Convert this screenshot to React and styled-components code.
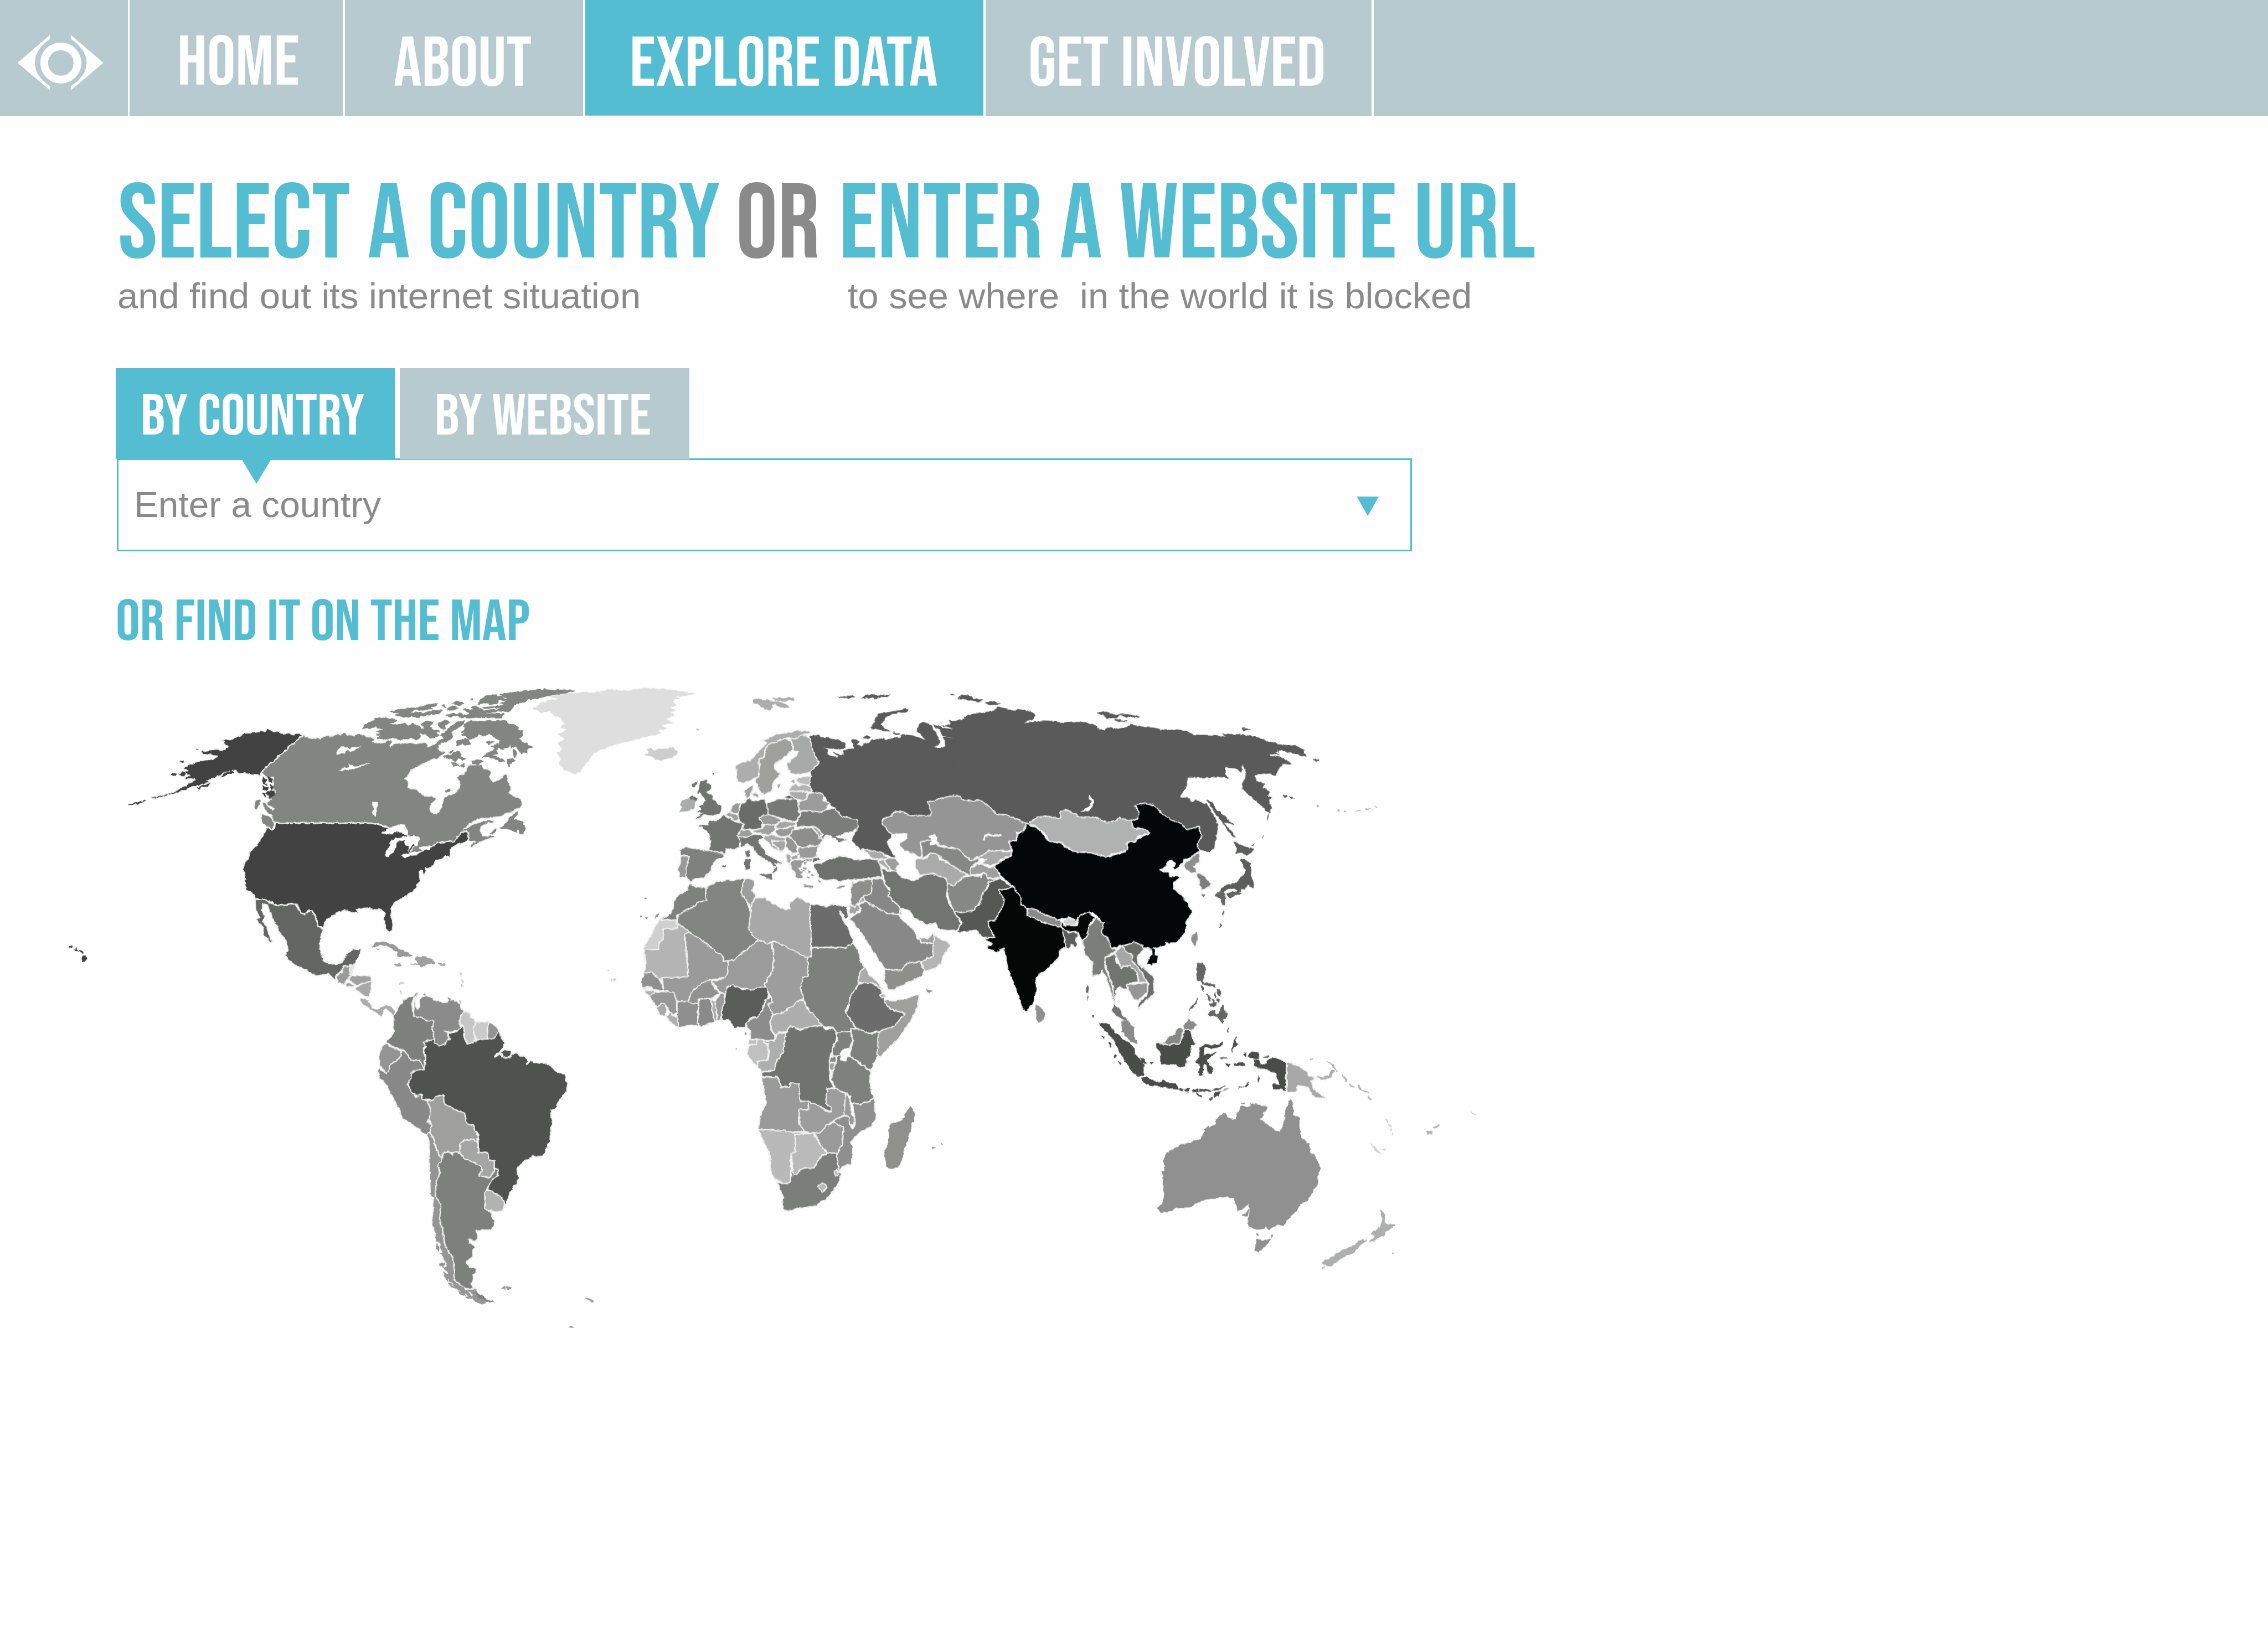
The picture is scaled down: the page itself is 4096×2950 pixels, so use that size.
import React, { useLayoutEffect, useRef, useState } from "react";
import styled, { createGlobalStyle } from "styled-components";

/* 1rem is ten design units */
const GlobalStyle = createGlobalStyle`
  html { font-size: 9.832px; }
  body { margin: 0; background: #fefefe; overflow: hidden; }
  *, *::before, *::after { box-sizing: border-box; }
`;

const teal = "#55bdd1";
const mist = "#b7cad0";
const grey = "#8a8a8a";
const display = `"Bebas Neue", Oswald, "Roboto Condensed", Roboto, sans-serif`;
const body = `"Helvetica Neue", "Liberation Sans", Arial, sans-serif`;

/* ---------- text fitted to a fixed measure ---------- */

/* $width is the inked width; $left and $right are the side bearings in em */
const FitBox = styled.span`
  display: block;
  flex: none;
  width: calc(${(p) => p.$width / 10}rem + ${(p) => p.$left + p.$right}em);
  margin: 0 -${(p) => p.$right}em 0 -${(p) => p.$left}em;
  text-align: left;
`;

const FitInner = styled.span`
  display: inline-block;
  vertical-align: top;
  white-space: pre;
  transform-origin: 0 0;
`;

function FitText({ width, left = 0.036, right = 0.018, children }) {
  const box = useRef(null);
  const inner = useRef(null);
  const [scale, setScale] = useState(1);
  useLayoutEffect(() => {
    const target = parseFloat(getComputedStyle(box.current).width);
    const natural = parseFloat(getComputedStyle(inner.current).width);
    setScale(target / natural);
  }, [width, children]);
  return (
    <FitBox ref={box} $width={width} $left={left} $right={right}>
      <FitInner ref={inner} style={{ transform: `scaleX(${scale})` }}>{children}</FitInner>
    </FitBox>
  );
}

/* ---------- navigation ---------- */

const NavBar = styled.nav`
  display: flex;
  width: 100%;
  height: 21.4rem;
  background: ${mist};
`;

const LogoCell = styled.a`
  flex: none;
  width: 23.8rem;
  border-right: 0.4rem solid #fff;
`;

const Logo = styled.svg`
  display: block;
  width: 23.4rem;
  height: 21.4rem;
`;

const NavItem = styled.a`
  flex: none;
  width: ${(p) => p.$width / 10}rem;
  padding: ${(p) => p.$top / 10}rem 0 0 ${(p) => p.$pad / 10}rem;
  border-right: 0.45rem solid #fff;
  background: ${(p) => (p.$active ? teal : mist)};
  background-clip: padding-box;
  box-shadow: ${(p) => (p.$active ? "inset 0 -0.2rem 0 #a4c8ce" : "none")};
  color: #fff;
  font: 400 12.86rem/0.8 ${display};
`;

/* ---------- page ---------- */

const Main = styled.main`
  display: flex;
  flex-direction: column;
  align-items: flex-start;
  padding: 12.4rem 0 0 21.3rem;
`;

const Heading = styled.h1`
  display: flex;
  gap: 3.5rem;
  margin: 0 0 0 0.7rem;
  height: 17.4rem;
  color: ${teal};
  font: 400 19.43rem/0.8 ${display};
`;

const Or = styled.span`
  color: ${grey};
  margin-right: 0.9rem;
`;

const Subtitles = styled.div`
  display: flex;
  gap: 38.6rem;
  height: 16.4rem;
  margin-left: 0.5rem;
  color: ${grey};
  font: 400 6.6rem/1 ${body};
`;

const Tabs = styled.div`
  display: flex;
  gap: 0.9rem;
  position: relative;
  z-index: 1;
`;

const Tab = styled.button`
  width: ${(p) => p.$width / 10}rem;
  height: 16.8rem;
  padding: 4.8rem 0 0 ${(p) => p.$pad / 10}rem;
  display: flex;
  align-items: flex-start;
  border: 0;
  background: ${(p) => (p.$active ? teal : mist)};
  color: #fff;
  font: 400 10.57rem/0.8 ${display};
`;

const Field = styled.div`
  position: relative;
  display: flex;
  justify-content: space-between;
  width: 237.9rem;
  height: 17.1rem;
  margin: -0.2rem 0 0 0.2rem;
  padding: 5rem 5.8rem 0 3.3rem;
  border: 0.4rem solid ${teal};
  color: ${grey};
  font: 400 6.6rem/1 ${body};

  &::before {
    content: "";
    position: absolute;
    left: 22.6rem;
    top: -0.1rem;
    width: 5.4rem;
    height: 4.5rem;
    background: ${teal};
    clip-path: polygon(0 0, 100% 0, 50% 100%);
  }
`;

const Caret = styled.span`
  width: 4.1rem;
  height: 3.6rem;
  margin-top: 1.7rem;
  background: ${teal};
  clip-path: polygon(0 0, 100% 0, 50% 100%);
`;

const MapTitle = styled.h2`
  margin: 8.9rem 0 0 0.2rem;
  height: 13.8rem;
  color: ${teal};
  font: 400 10.57rem/0.8 ${display};
`;

const WorldMap = styled.svg`
  display: block;
  width: 264rem;
  height: 122rem;
  margin-left: -11.3rem;
`;

const Land = styled.path`
  stroke: #f0f0f0;
  stroke-width: 2.1px;
  stroke-linejoin: round;
  vector-effect: non-scaling-stroke;
`;

const Isle = styled.path`
  stroke: ${(p) => p.fill};
  stroke-width: 1.4px;
  stroke-linejoin: round;
  vector-effect: non-scaling-stroke;
`;

const Water = styled.path`
  fill: #fefefe;
`;

const Shoreline = styled.path`
  fill: none;
  stroke: #f4f4f4;
  stroke-width: 4px;
  vector-effect: non-scaling-stroke;
`;

/* Each sheet has its own drawing grid: land is outlined, isles are not. */
const sheets = [
  {
    id: "greenland",
    at: "scale(2.657)",
    land: [],
    isles: [
      ["#dedede", "M369,490 375,486 387,483 380,482 392,480 400,479 412,479 420,477 432,478 445,476 462,477 468,478 480,479.5 476,481 467,481.5 469,483 465,485 468,488 463,489 467,491 463,493 466,495 460,497 465,500 457,501 461,504 455,505 457,507 448,509 440,511 433,513 427,514 420,517 414,519 410,521 407,526 403,530 401,534 397,535 391,533 387,529 388,525 385,521 389,518 386,514 391,511 386,508 392,505 388,503 391,500 387,496 380,493 385,492 373,492Z"],
    ],
  },
  {
    id: "north-america",
    at: "translate(100 1240) scale(.5995 .4082)",
    land: [
      ["#838583", "M762,269 770,278 785,282 800,289 805,282 815,286 830,275 850,276 868,266 875,272 892,258 898,272 905,265 915,275 930,266 945,268 955,276 970,278 985,292 975,302 990,306 1010,302 1022,292 1035,298 1030,322 1048,306 1065,310 1085,303 1110,310 1130,302 1145,312 1145,325 1170,308 1180,290 1190,300 1180,318 1178,335 1190,345 1200,352 1185,368 1175,378 1150,385 1140,395 1120,408 1105,422 1092,430 1084,455 1074,468 1085,480 1082,508 1110,515 1120,530 1135,545 1165,548 1172,560 1155,580 1150,600 1155,618 1168,624 1182,612 1190,575 1195,548 1225,535 1243,510 1242,480 1232,465 1238,452 1255,445 1262,425 1268,405 1290,405 1308,402 1315,420 1330,428 1338,440 1335,465 1345,485 1365,470 1380,450 1390,448 1388,475 1397,490 1400,515 1395,530 1405,542 1420,550 1430,560 1433,585 1425,600 1405,615 1385,625 1370,638 1335,643 1300,650 1275,668 1255,695 1270,685 1290,670 1310,660 1330,655 1350,660 1325,670 1308,685 1305,702 1315,725 1348,722 1350,735 1325,740 1300,758 1285,770 1275,780 1275,765 1290,750 1270,750 1265,705 1255,708 1240,735 1225,748 1185,752 1160,770 1150,785 1110,800 1080,805 1085,770 1080,722 1030,690 985,668 965,667 676,667 668,645 662,620 672,600 655,590 650,575 665,560 648,552 670,545 678,525 668,505 672,490 670,460 655,468 640,448 632,440Z"],
      ["#424242", "M762,269 745,265 732,268 716,262 700,264 686,256 672,254 660,246 652,243 645,252 630,254 612,256 600,262 585,262 575,270 560,277 550,286 538,292 525,288 510,293 520,300 516,312 532,320 524,332 512,338 498,334 480,338 465,344 452,342 448,350 455,360 475,358 490,365 500,366 492,375 480,380 460,384 440,388 425,398 412,406 400,413 395,425 410,432 398,440 406,450 415,455 400,460 398,470 418,468 430,472 418,485 400,500 385,512 370,522 350,532 335,540 320,545 298,553 298,560 330,552 350,540 370,534 400,520 420,505 440,500 465,488 480,484 470,475 500,458 512,450 522,442 540,432 555,430 562,442 580,444 600,448 622,450 634,458 632,440 680,378Z"],
      ["#424242", "M677,668 965,668 985,672 1005,682 1025,690 1045,690 1080,722 1110,760 1085,810 1110,808 1130,788 1160,770 1175,756 1225,750 1240,722 1250,706 1268,710 1268,735 1262,752 1240,765 1225,770 1212,790 1213,820 1200,815 1190,828 1168,838 1158,860 1146,875 1138,865 1140,885 1132,908 1126,880 1118,885 1122,905 1122,925 1115,940 1112,960 1090,985 1072,1000 1050,1020 1038,1035 1033,1050 1034,1090 1038,1125 1036,1145 1028,1160 1015,1140 1010,1105 1012,1070 1000,1055 985,1058 960,1050 940,1052 925,1055 935,1075 918,1068 905,1070 890,1060 870,1068 855,1085 835,1100 828,1120 825,1142 808,1132 805,1105 798,1080 790,1062 780,1062 768,1078 755,1070 748,1045 740,1030 720,1028 712,1036 682,1036 655,1018 640,1010 615,1008 614,992 600,978 587,968 585,930 584,900 578,880 583,845 595,825 600,795 620,765 635,735 645,710 652,685 668,700 675,690Z"],
      ["#646664", "M615,1012 640,1012 655,1022 680,1038 712,1038 722,1030 738,1032 746,1050 755,1072 768,1080 782,1064 790,1064 798,1085 804,1110 808,1134 826,1145 818,1175 812,1210 818,1250 825,1285 840,1302 858,1302 882,1295 892,1270 898,1248 915,1236 943,1233 938,1255 930,1275 922,1302 905,1302 905,1312 885,1312 880,1335 865,1350 862,1377 850,1360 840,1345 825,1348 812,1357 790,1348 765,1325 735,1305 715,1280 708,1262 716,1240 712,1200 700,1175 690,1160 680,1130 675,1110 665,1085 660,1060 655,1035 638,1032 636,1060 645,1085 640,1110 650,1130 655,1155 660,1185 670,1200 662,1205 642,1170 640,1140 628,1120 618,1100 630,1095 618,1060Z"],
      ["#9a9a9a", "M865,1352 885,1340 882,1325 890,1312 905,1312 905,1345 915,1350 900,1368 888,1392 868,1388Z"],
      ["#dcdcdc", "M908,1310 922,1302 918,1325 910,1345 905,1350Z"],
      ["#a0a0a0", "M900,1370 915,1355 945,1352 970,1358 972,1375 945,1388 930,1400 920,1395Z"],
      ["#a4a4a4", "M890,1390 902,1386 918,1398 916,1408 896,1402Z"],
      ["#a8a8a8", "M920,1412 945,1390 973,1377 970,1415 964,1455 945,1440Z"],
    ],
    isles: [
      ["#adafae", "M939,1460 962,1467 968,1488 973,1508 957,1492 944,1482Z"],
      ["#ababab", "M974,1505 990,1509 1005,1495 1025,1490 1040,1508 1041,1528 1032,1518 1020,1500 1007,1510 1002,1534 986,1518Z"],
      ["#9a9a9a", "M974,1226 985,1207 1010,1202 1035,1213 1060,1238 1095,1262 1080,1267 1055,1267 1050,1245 1025,1225 1000,1213Z"],
      ["#a0a0a0", "M1092,1303 1115,1303 1112,1292 1106,1280 1110,1271 1135,1271 1156,1280 1168,1299 1140,1303 1127,1315 1120,1305Z"],
      ["#424242", "M640,462 650,470 645,485 652,495 640,492ZM655,460 668,470 668,485 658,480ZM640,500 655,510 650,522 638,515ZM660,495 672,505 665,518ZM655,525 675,520 672,545 660,550 650,535ZM640,530 648,535 645,552ZM228,588 238,580 250,578 262,570 270,573 250,582ZM273,568 278,564 280,568ZM510,460 520,446 545,430 550,440 530,446ZM438,512 455,498 475,490 470,502 450,505 445,515ZM358,450 365,442 375,450 365,456ZM384,447 392,436 402,448 396,456ZM385,388 396,390 388,393ZM436,334 442,338 438,339ZM46,1224 53,1220 53,1228ZM63,1238 68,1232 73,1240ZM76,1243 88,1248 88,1254 80,1248ZM88,1268 96,1264 100,1278 88,1291 85,1275Z"],
      ["#838583", "M945,242 952,226 965,215 985,198 1010,192 1030,198 1048,202 1042,212 1022,222 1050,226 1075,218 1082,230 1098,218 1120,232 1125,250 1118,262 1120,280 1110,292 1095,284 1085,286 1060,292 1040,280 1015,292 990,284 1005,276 985,270 1005,262 985,255 1020,248 990,240 985,230 970,240Z"],
      ["#838583", "M1125,222 1145,208 1162,215 1150,230 1160,245 1180,255 1165,262 1180,270 1170,282 1150,285 1140,270 1122,265 1118,250 1135,240ZM1175,215 1205,207 1212,215 1195,232 1198,245 1182,238ZM1205,245 1232,215 1258,204 1252,225 1235,240 1215,260 1222,275 1210,295 1190,305 1178,298 1195,285 1182,270 1198,262ZM1030,168 1050,158 1090,148 1112,155 1085,166 1060,172ZM1045,180 1080,168 1130,172 1165,160 1190,160 1180,175 1140,180 1110,192 1075,188ZM1105,152 1140,138 1175,128 1170,140 1145,148 1160,155 1125,160ZM1200,182 1225,172 1238,182 1218,188ZM1220,128 1235,118 1255,130 1242,140ZM1205,150 1222,140 1238,148 1225,158 1208,160ZM1268,178 1275,165 1300,172 1380,178 1372,192 1300,190 1272,195 1245,190ZM1252,152 1280,160 1300,152 1320,162 1345,155 1360,165 1320,172 1290,170 1262,165ZM1275,148 1290,138 1302,150 1285,155ZM1188,140 1196,134 1200,144ZM1236,180 1248,170 1256,182 1246,192ZM1275,108 1282,108 1280,114Z"],
      ["#838583", "M1302,118 1325,95 1355,90 1370,100 1380,108 1355,118 1362,126 1335,134 1315,125 1300,130ZM1365,88 1392,82 1410,76 1445,74 1485,67 1530,69 1568,68 1592,73 1568,82 1545,86 1510,95 1480,105 1450,112 1440,120 1408,138 1400,150 1400,162 1378,166 1345,160 1370,150 1350,145 1330,152 1312,148 1365,140 1390,128 1368,128 1385,115 1370,112 1400,104 1372,98Z"],
      ["#838583", "M1255,222 1280,208 1320,210 1345,207 1385,208 1392,222 1410,228 1425,238 1420,248 1435,255 1436,275 1425,285 1432,300 1448,310 1463,325 1450,335 1450,352 1438,348 1430,355 1415,320 1400,330 1398,310 1388,325 1370,335 1365,325 1350,340 1360,355 1340,362 1355,372 1372,375 1380,390 1368,392 1345,375 1325,368 1312,375 1325,350 1340,345 1352,330 1340,322 1362,310 1368,295 1352,285 1340,272 1330,262 1322,275 1300,268 1295,282 1272,288 1260,275 1248,270 1265,255 1248,258 1258,240ZM1388,378 1405,375 1412,385 1398,400 1392,412 1388,395ZM1408,335 1418,345 1416,362 1410,372 1404,350ZM1232,300 1255,288 1268,290 1275,310 1262,318 1250,310 1235,318ZM1192,368 1215,360 1238,340 1245,355 1242,370 1260,378 1250,385 1240,375 1230,392 1215,378ZM1280,388 1295,380 1312,390 1300,402 1280,400ZM1215,396 1228,396 1240,410 1225,408ZM1245,408 1256,402 1254,416ZM1200,520 1210,514 1212,524 1203,532ZM1322,304 1332,298 1348,304 1330,316ZM1210,345 1225,338 1215,352Z"],
      ["#838583", "M1366,692 1378,678 1390,655 1405,632 1420,618 1415,635 1405,652 1418,655 1437,662 1435,678 1442,680 1440,700 1434,717 1425,705 1430,692 1415,702 1418,712 1405,700 1385,692ZM1386,580 1420,568 1395,584ZM1330,655 1345,660 1335,664ZM1345,700 1352,690 1350,710 1335,718ZM636,630 658,638 668,655 672,672 666,695 655,680 642,668 636,648ZM615,600 618,570 632,565 628,575 620,605ZM638,575 648,582 655,600 665,605 668,625 655,620 645,600Z"],
      ["#a8a8a8", "M1043,1300 1060,1300 1066,1306 1052,1312 1043,1307ZM1178,1300 1195,1300 1197,1308 1182,1308ZM988,1228 996,1232 990,1235Z"],
      ["#d2d2d2", "M1245,1345 1247,1345 1247,1354ZM1250,1370 1252,1380 1249,1388ZM1060,1386 1072,1390 1060,1391Z"],
    ],
    water: "M862,355 868,340 880,325 898,325 905,332 925,322 940,320 922,334 918,342 904,348 900,340 888,352 868,358ZM872,432 890,418 905,414 903,400 915,412 935,408 952,400 972,398 945,410 922,422 900,428ZM975,570 992,570 988,600 985,640 978,630 975,615 982,605 974,590ZM1000,714 1018,697 1030,688 1045,682 1056,672 1075,674 1084,700 1084,720 1064,712 1048,708 1035,716ZM1016,818 1015,795 1028,770 1032,748 1045,735 1078,726 1078,740 1050,752 1045,775 1038,800 1024,820ZM1080,728 1105,724 1120,730 1118,748 1112,772 1100,762 1092,778 1082,798 1086,770 1076,770 1072,752ZM1062,812 1085,802 1120,793 1112,804 1095,810 1075,826ZM1118,778 1150,770 1162,772 1150,786 1122,788Z",
  },
  {
    id: "south-america",
    at: "translate(640 1780) scale(.33333 .43367)",
    land: [
      ["#7e807e", "M260,190 270,165 290,150 300,130 320,128 335,120 355,118 375,104 395,100 380,112 362,124 350,150 354,175 360,200 380,206 400,204 415,215 430,220 470,220 465,260 472,300 440,308 413,312 430,325 415,335 415,355 426,375 420,425 405,410 397,388 345,390 325,365 310,350 285,342 255,335 225,320 208,318 215,305 235,290 250,270 248,200Z"],
      ["#8b8b8b", "M372,122 362,140 362,170 358,200 380,206 400,204 415,215 430,220 472,222 464,240 470,280 475,315 500,328 535,318 548,300 562,297 545,285 548,270 530,262 575,268 590,262 628,252 612,235 618,205 632,188 640,178 622,172 620,150 605,148 590,135 555,130 545,142 520,143 500,135 465,132 455,118 430,116 400,122 390,132 396,162 382,172 370,160Z"],
      ["#c6c6c6", "M633,186 655,180 668,190 672,205 690,212 706,225 690,245 692,275 706,302 690,312 662,320 642,300 640,265 632,240 612,235 618,208Z"],
      ["#cacaca", "M706,226 770,226 765,262 772,298 748,298 735,302 710,303 695,280 688,250Z"],
      ["#949494", "M772,230 790,232 815,245 830,260 815,285 800,302 770,298 766,262Z"],
      ["#949494", "M205,318 240,330 260,340 293,345 292,370 265,392 235,403 225,420 220,438 205,440 190,428 175,410 168,385 172,350 190,325Z"],
      ["#888888", "M160,430 172,415 182,432 210,442 222,435 230,408 265,392 292,368 293,345 315,352 345,390 397,388 402,400 420,425 375,430 352,438 345,465 328,490 350,525 375,542 403,530 408,555 440,560 452,590 448,640 432,650 460,660 445,702 430,704 405,690 380,674 345,660 320,645 300,632 288,620 285,600 265,575 250,555 240,535 225,515 210,495 185,470 165,465 168,450Z"],
      ["#505250", "M470,300 475,315 500,328 535,318 548,300 562,297 548,285 550,270 577,272 600,262 632,242 640,262 638,300 662,320 700,308 740,298 790,298 805,295 832,258 838,285 852,300 866,315 850,335 835,350 842,362 850,375 890,378 902,360 930,358 950,368 968,370 990,385 985,405 1005,390 1025,398 1055,400 1095,400 1120,415 1150,438 1195,445 1200,470 1211,492 1200,520 1185,540 1165,555 1150,575 1142,595 1118,600 1118,630 1127,655 1118,680 1115,725 1100,745 1088,775 1070,795 1015,795 995,808 975,813 950,828 930,845 932,865 941,885 930,910 915,925 905,945 885,965 875,990 865,1005 855,980 830,960 800,948 768,935 780,910 795,892 825,875 822,850 805,845 805,815 775,810 770,780 718,778 716,700 695,680 693,662 655,660 645,635 640,612 600,602 570,590 540,580 525,560 525,535 490,540 465,555 410,555 405,530 385,540 350,525 330,490 345,465 350,440 375,430 420,425 428,370 415,345 428,330 413,312Z"],
      ["#505250", "M842,350 862,342 900,350 895,370 875,380 855,376Z"],
      ["#9f9f9e", "M436,560 465,555 490,540 525,535 528,568 545,580 575,590 600,602 642,612 645,635 655,660 693,662 695,680 714,705 712,735 680,722 640,728 618,738 615,777 575,780 545,775 530,777 515,795 500,790 490,765 480,750 470,720 455,700 450,690 460,660 448,640 452,590Z"],
      ["#a5a5a5", "M618,738 645,727 680,722 710,735 718,778 770,782 775,810 805,815 803,860 780,885 718,878 735,855 735,840 700,825 665,812 640,805 615,780Z"],
      ["#b2b2b2", "M754,938 780,940 800,948 835,962 860,985 860,1010 850,1025 835,1028 800,1028 770,1022 753,1018Z"],
      ["#7e807e", "M515,795 530,777 555,777 575,790 585,778 615,780 625,795 640,806 665,812 700,825 735,840 735,855 718,878 780,887 803,862 803,848 818,848 826,860 822,878 800,890 780,910 765,935 752,945 752,1018 788,1032 790,1052 808,1070 805,1090 785,1105 740,1108 705,1108 712,1122 715,1145 695,1152 662,1147 668,1160 690,1170 706,1180 685,1192 688,1220 665,1232 655,1245 670,1265 707,1270 702,1288 688,1295 690,1318 676,1335 702,1358 665,1358 635,1352 610,1335 584,1318 582,1250 572,1218 550,1195 530,1170 520,1100 503,1060 512,1000 480,965 485,900 503,870 495,825 512,820Z"],
      ["#959595", "M432,705 450,692 470,725 480,755 500,790 518,798 512,820 495,825 503,870 485,900 480,965 512,1000 503,1060 520,1110 530,1170 550,1195 572,1218 582,1250 583,1318 605,1335 590,1342 560,1330 545,1310 530,1300 545,1290 520,1265 540,1258 532,1240 520,1228 505,1205 520,1200 500,1185 510,1165 480,1158 478,1120 460,1085 468,1040 468,970 452,955 450,900 448,850 445,740Z"],
    ],
    isles: [
      ["#959595", "M488,1168 498,1175 500,1195 490,1190ZM500,1255 530,1245 525,1265ZM525,1285 545,1300 550,1325 530,1305ZM555,1330 572,1338 590,1355 575,1350ZM575,1325 610,1340 640,1355 700,1358 715,1372 705,1385 735,1400 760,1415 735,1420 700,1410 690,1395 660,1398 645,1385 615,1378 610,1362 590,1350Z"],
      ["#7e807e", "M700,1372 725,1380 760,1402 800,1410 770,1412 735,1400 715,1390Z"],
      ["#9a9a9a", "M845,1355 860,1347 870,1352 860,1358ZM875,1345 903,1350 890,1360 876,1356ZM1305,1393 1330,1397 1352,1408 1345,1411 1325,1402ZM1218,1515 1240,1520 1222,1520Z"],
      ["#cccccc", "M615,18 622,20 620,25ZM622,45 634,50 634,60ZM626,68 634,74 626,78ZM285,95 292,92 290,108ZM610,135 622,133 620,148 612,145ZM1430,6 1440,6 1436,10ZM1450,45 1458,48 1452,52ZM1466,44 1474,46 1467,52Z"],
      ["#8b8b8b", "M418,104 428,108 420,112ZM550,126 565,128 558,132Z"],
    ],
    water: "M600,1360 625,1365 620,1368ZM655,1368 690,1380 680,1385ZM888,945 905,940 895,965 885,968ZM530,1278 545,1282 540,1288ZM640,1375 665,1388 650,1388Z",
    shores: "M805,372 840,355M700,1358 640,1358",
  },
  {
    id: "europe",
    at: "translate(1150 1240) scale(.40816 .33333)",
    land: [
      ["#adadad", "M492,500 505,492 520,485 540,478 560,470 575,450 590,435 605,410 620,395 635,372 610,362 635,352 655,340 680,325 705,322 740,318 765,305 790,308 810,305 835,318 820,328 812,325 790,335 770,350 740,355 735,348 715,356 690,362 675,368 650,380 630,405 622,440 618,460 596,470 603,520 594,570 575,575 560,582 530,598 505,590 495,560 500,545Z"],
      ["#9f9f9e", "M650,378 670,372 690,362 715,354 740,362 748,385 752,418 735,428 722,448 700,470 675,485 668,500 672,525 695,545 685,565 665,590 660,630 650,645 628,658 608,655 595,620 580,590 600,545 602,500 596,465 622,455 630,405Z"],
      ["#a8aaa9", "M740,350 770,350 790,333 812,335 828,350 835,380 840,410 848,440 870,485 850,510 830,540 795,545 760,550 740,542 728,510 722,490 745,470 770,440 772,425 755,420 750,385 745,370Z"],
      ["#bcbcbc", "M762,572 790,562 832,560 828,602 800,605 768,592Z"],
      ["#b4b4b4", "M735,635 745,610 762,600 775,615 800,603 830,615 838,648 800,640 735,642Z"],
      ["#aaacab", "M735,642 800,640 818,655 815,680 798,695 770,685 740,670Z"],
      ["#9c9c9c", "M818,658 850,648 880,652 888,665 890,690 918,710 905,725 902,745 882,758 820,750 778,748 775,700 798,695 815,680Z"],
      ["#777977", "M630,708 655,695 680,685 720,683 770,688 778,705 776,745 785,770 768,808 720,800 690,790 650,770 640,768Z"],
      ["#a0a0a0", "M533,635 550,620 575,605 570,640 560,670 545,682 535,660ZM568,658 588,650 598,665 590,680 575,672Z"],
      ["#6a6c6a", "M515,710 545,702 542,685 555,680 575,695 600,690 628,688 634,730 640,768 600,785 602,800 615,820 610,850 570,855 540,852 525,850 530,820 505,800 505,760Z"],
      ["#989898", "M470,752 478,722 492,710 518,706 512,735 505,765 485,765Z"],
      ["#a0a0a0", "M445,770 468,760 500,768 507,802 490,805Z"],
      ["#727472", "M322,830 350,825 372,830 368,805 400,805 415,795 430,785 437,768 470,795 500,812 530,820 522,855 500,885 512,895 512,955 480,962 450,960 445,988 370,965 382,920 378,890 362,858Z"],
      ["#7f817f", "M240,965 268,950 320,960 370,965 400,975 445,988 440,1005 400,1028 385,1060 385,1080 360,1105 350,1120 310,1125 290,1142 275,1118 268,1100 275,1045 285,1002 248,995Z"],
      ["#999999", "M248,998 285,1002 275,1045 268,1118 237,1118 238,1090 232,1070 245,1040Z"],
      ["#9c9c9c", "M500,885 520,855 545,852 570,870 565,885 545,895 512,895Z"],
      ["#a0a0a0", "M570,862 610,850 625,828 672,825 672,855 650,882 600,872 575,872Z"],
      ["#9a9a9a", "M600,785 640,768 700,800 670,828 615,825Z"],
      ["#a6a6a6", "M670,835 700,805 735,808 765,812 762,830 735,835 715,850 685,850Z"],
      ["#999999", "M668,862 690,850 715,850 755,832 762,850 735,888 690,895Z"],
      ["#8e8e8c", "M752,855 800,845 840,842 858,870 865,890 888,905 868,945 830,942 800,952 772,945 755,915 735,892Z"],
      ["#aaacab", "M835,838 855,838 870,860 888,882 868,900 858,868Z"],
      ["#7b7d7b", "M785,752 820,750 882,758 900,740 940,735 955,760 970,780 1010,790 1045,802 1045,840 1020,865 985,872 970,885 945,892 980,905 1002,912 975,918 958,928 945,905 925,898 920,882 900,885 885,905 875,895 888,880 870,855 850,835 765,840 770,808 785,775Z"],
      ["#959595", "M718,895 735,890 755,915 770,940 772,975 750,988 735,970 720,950Z"],
      ["#aaaaaa", "M620,905 622,885 665,882 690,895 718,898 716,920 655,915 665,940 700,975 665,960 640,925Z"],
      ["#a6a6a6", "M658,918 716,918 720,950 705,972 670,945Z"],
      ["#a9abaa", "M720,990 735,985 745,1005 742,1030 735,1048 722,1030Z"],
      ["#a3a3a3", "M742,998 772,990 778,1015 745,1022Z"],
      ["#9a9a9a", "M775,952 868,943 858,975 862,1000 835,1012 780,1012Z"],
      ["#999999", "M738,1045 748,1022 800,1018 840,1012 840,1028 805,1030 790,1045 795,1060 775,1065 800,1090 790,1100 800,1120 785,1125 770,1120 758,1090 748,1075Z"],
      ["#737573", "M512,915 510,890 545,895 575,878 612,882 620,900 598,912 605,935 620,955 630,985 655,1005 675,1015 705,1040 705,1050 685,1038 672,1042 682,1070 665,1100 658,1095 668,1065 658,1040 625,1020 600,1000 580,975 570,950 548,935 515,950Z"],
      ["#6e706e", "M838,1035 842,1005 868,1010 880,1022 850,1030ZM845,1040 880,1038 905,1022 945,1005 980,998 1010,1012 1040,1022 1080,1018 1125,1015 1145,1035 1148,1075 1155,1112 1110,1118 1060,1128 1015,1128 990,1130 962,1142 935,1130 905,1138 870,1120 860,1095 850,1070Z"],
      ["#aaaaaa", "M1060,962 1105,968 1150,978 1168,995 1185,1010 1125,1018 1100,1005 1090,985Z"],
      ["#9e9e9e", "M1165,1018 1200,1008 1215,1010 1232,1040 1215,1065 1220,1098 1190,1070 1172,1045Z"],
      ["#adadad", "M1128,1020 1160,1018 1175,1048 1192,1072 1180,1080 1150,1045Z"],
    ],
    isles: [
      ["#cecece", "M85,440 105,432 95,412 112,405 125,420 145,410 175,410 190,405 215,402 218,415 232,430 225,440 205,452 180,462 155,470 135,465 125,452 105,445Z"],
      ["#adadad", "M572,140 600,133 615,140 640,138 650,145 690,152 712,158 732,175 715,184 690,175 675,160 660,165 660,178 645,195 635,188 618,185 590,158 575,155ZM662,130 700,130 755,127 755,138 730,143 690,143 670,138ZM316,300 326,302 318,304Z"],
      ["#717371", "M335,600 340,585 365,582 358,600 382,608 378,625 362,645 340,655 335,642 325,655 330,625ZM345,650 372,652 385,665 388,685 405,700 412,722 430,725 430,745 420,765 385,772 350,770 315,792 340,768 355,762 322,755 345,745 330,725 352,708 362,690 350,678 342,660ZM288,682 302,668 320,680 312,695 295,692ZM300,605 318,590 315,605 305,622ZM390,548 400,538 395,552Z"],
      ["#aaadac", "M245,712 258,690 280,685 308,695 312,715 305,740 270,752 240,752 255,732Z"],
      ["#5a5a5a", "M718,678 740,670 760,675 755,686 725,686Z"],
      ["#adadad", "M745,590 755,580 758,592ZM682,615 692,600 690,620ZM770,990 775,985 775,992Z"],
      ["#737573", "M605,1098 630,1102 655,1098 655,1125 640,1120 615,1108ZM535,1022 558,1018 555,1070 538,1072ZM542,980 552,972 555,1000 545,1005ZM435,1055 445,1050 448,1060 438,1062Z"],
      ["#999999", "M798,1160 845,1166 842,1172 805,1168ZM950,1176 965,1162 985,1160 970,1176ZM800,1060 815,1065 808,1075ZM820,1080 830,1085 822,1088ZM800,1040 812,1035 806,1045ZM835,1100 845,1110 838,1108ZM820,1110 826,1118 818,1116ZM865,1130 876,1142 868,1142ZM790,1070 805,1085 796,1082Z"],
      ["#5a5a5a", "M818,350 845,332 868,332 875,345 905,348 940,355 985,378 990,395 975,410 950,408 900,402 865,390 905,412 905,435 925,448 955,458 955,445 935,430 970,445 985,440 975,425 1000,410 1030,408 1025,385 1015,360 1035,358 1050,370 1035,385 1060,395 1080,380 1110,362 1150,350 1170,360 1200,348 1235,350 1245,330 1290,335 1350,362 1335,335 1310,310 1320,270 1340,262 1370,275 1385,305 1405,345 1415,375 1395,395 1375,398 1410,405 1435,395 1440,370 1428,345 1470,350 1495,375 1475,345 1440,340 1425,335 1410,300 1385,275 1420,290 1445,298 1490,300 1425,278 1465,275 1455,255 1535,250 1520,235 1568,215 1568,705 1500,668 1460,670 1400,720 1360,800 1230,800 1165,850 1200,875 1175,935 1210,1010 1170,985 1060,960 1015,912 1040,860 1045,800 970,780 940,735 918,710 885,655 838,648 828,600 835,535 870,485 850,440 835,380Z"],
      ["#5a5a5a", "M1102,290 1120,265 1120,250 1140,215 1170,210 1205,202 1245,195 1255,187 1272,195 1258,205 1220,208 1180,222 1160,245 1145,270 1160,295 1188,310 1160,308 1125,300ZM1070,345 1085,335 1100,345 1088,352ZM1202,318 1235,325 1225,330ZM958,122 990,124 1000,115 1028,120 1005,130ZM1060,128 1080,112 1095,120 1110,105 1130,118 1160,112 1188,114 1155,122 1120,130 1095,125ZM1495,130 1510,112 1560,118 1568,140 1530,132ZM1460,110 1480,110 1470,114Z"],
      ["#888888", "M66,1330 72,1335 66,1338ZM85,1340 95,1338 90,1346ZM130,1340 145,1318 138,1335ZM85,1230 92,1232 88,1235Z"],
    ],
    water: "M960,1300 965,1300 1000,1345 995,1352 980,1330Z",
  },
  {
    id: "africa-arabia",
    at: "translate(1150 1580) scale(.40816 .43367)",
    land: [
      ["#7f817f", "M150,252 190,235 212,210 215,178 235,152 275,130 283,105 290,100 305,112 355,118 362,172 320,182 310,195 232,235 230,255Z"],
      ["#cfcfcf", "M78,380 95,345 120,310 125,285 155,255 230,255 230,292 168,292 168,340 150,355 148,380Z"],
      ["#b4b4b4", "M80,380 148,380 150,350 168,340 168,292 230,292 230,268 295,310 265,315 280,498 160,500 155,515 140,495 115,478 82,480 88,440Z"],
      ["#838583", "M232,235 310,195 320,182 362,172 358,118 400,95 450,85 490,86 530,80 530,105 518,140 548,180 560,230 555,290 570,320 597,338 490,420 440,430 440,410 395,380 232,268Z"],
      ["#9c9e9d", "M532,82 550,78 575,85 580,105 568,130 588,155 565,180 563,207 548,180 518,140Z"],
      ["#a8a8a8", "M563,207 568,180 590,160 630,162 658,185 680,195 715,208 738,208 738,178 770,160 790,165 828,185 835,405 815,415 668,345 640,355 600,338 570,320 553,290 560,230Z"],
      ["#6c6c6c", "M828,186 860,190 900,200 930,188 965,195 998,198 1000,240 990,252 962,215 980,260 1000,290 1020,330 1022,350 998,370 835,370Z"],
      ["#7e807e", "M835,372 990,372 1022,352 1045,380 1052,410 1058,440 1075,455 1052,480 1045,530 1010,580 1005,605 988,645 1015,685 1035,712 1005,728 950,730 930,712 880,703 830,650 805,600 785,545 795,497 820,492 818,410 835,408Z"],
      ["#9d9d9d", "M655,350 670,345 818,415 820,492 797,495 785,545 802,588 765,602 755,620 725,630 720,645 690,652 660,655 638,612 662,605 640,560 625,525 640,500 662,470 665,380Z"],
      ["#9b9b9b", "M597,340 640,355 658,347 655,375 665,390 662,470 640,500 625,525 630,542 605,540 560,550 540,545 520,545 480,532 455,540 447,570 425,562 385,515 445,500 458,480 460,430 490,420Z"],
      ["#9a9a9a", "M265,312 298,312 395,380 438,410 440,430 458,430 458,480 445,498 380,510 345,520 300,552 280,600 232,600 215,562 168,558 162,500 282,498Z"],
      ["#8f8f8f", "M68,515 82,480 115,478 140,495 158,520 168,557 120,548 78,552 76,545 125,545 110,538 76,542Z"],
      ["#979797", "M105,575 130,560 168,558 215,562 228,600 228,650 212,660 195,640 175,610 160,608 140,625 118,598Z"],
      ["#b0b0b0", "M80,555 128,553 128,565 105,575Z"],
      ["#a8a8a8", "M138,628 160,608 175,610 185,635 178,662 150,655Z"],
      ["#aeaeae", "M178,668 200,642 212,660 230,668 240,712 205,692Z"],
      ["#8f8f8f", "M230,602 285,600 328,612 322,650 325,702 280,702 240,712 230,668Z"],
      ["#929290", "M280,602 300,552 345,520 382,510 390,530 422,565 385,585 328,590 325,612Z"],
      ["#8a8a8a", "M328,590 382,588 390,640 397,688 340,708 322,690 328,640Z"],
      ["#acacac", "M385,590 400,600 405,630 410,682 398,685 390,640Z"],
      ["#9b9b9b", "M402,605 425,565 443,568 447,600 430,635 430,680 412,682Z"],
      ["#5b5d5b", "M430,678 430,635 447,600 447,570 455,540 480,530 520,547 560,550 605,540 635,542 645,572 622,610 610,640 590,672 570,665 545,690 535,712 482,715 475,690 460,678Z"],
      ["#8c8c8c", "M543,692 570,668 590,672 622,620 630,590 650,580 662,605 640,612 660,655 648,690 655,720 672,745 670,765 560,760 558,720 545,712Z"],
      ["#adadad", "M660,658 690,652 725,640 725,630 755,618 765,602 800,592 815,632 845,655 880,700 840,705 785,718 740,703 720,728 690,732 672,745 655,720 648,690Z"],
      ["#bcbcbc", "M555,763 587,763 587,783 552,783Z"],
      ["#c0c0c0", "M543,822 555,785 587,783 590,760 620,762 622,778 640,785 642,810 635,850 590,855 592,880 565,850Z"],
      ["#acafad", "M620,765 670,768 680,738 720,733 710,808 682,850 665,892 610,897 590,872 600,852 640,850 645,815 640,778 622,778Z"],
      ["#717371", "M610,900 640,900 665,892 682,850 710,808 720,733 738,703 785,720 840,705 880,703 900,720 930,712 945,730 948,762 930,795 915,850 920,900 938,965 905,970 902,1035 922,1048 920,1068 870,1040 785,1020 778,948 740,945 735,962 698,965 685,920 612,918Z"],
      ["#9a9a9a", "M610,922 682,920 698,965 735,962 740,945 778,948 785,1022 822,1025 820,1058 780,1058 780,1118 805,1150 760,1155 715,1148 597,1140 600,1100 615,1060 632,1030 620,965Z"],
      ["#9d9d9d", "M822,1025 870,1040 905,1068 922,1068 922,1048 902,1035 905,970 940,968 990,992 985,1080 935,1105 912,1118 870,1158 830,1155 805,1150 780,1118 780,1058 820,1058Z"],
      ["#b9b9b9", "M597,1142 715,1148 760,1155 850,1155 762,1165 762,1238 743,1240 740,1360 728,1372 705,1370 690,1358 672,1355 655,1330 645,1240 610,1175Z"],
      ["#bababa", "M763,1164 845,1158 862,1190 880,1210 900,1240 875,1260 845,1308 805,1305 785,1310 770,1335 752,1332 745,1240 763,1238Z"],
      ["#9a9a9a", "M848,1158 872,1158 900,1128 928,1112 980,1132 975,1205 950,1242 905,1240 882,1215Z"],
      ["#7c7e7c", "M680,1362 705,1372 730,1372 742,1360 745,1300 752,1332 770,1335 788,1310 805,1305 845,1308 875,1262 905,1243 948,1242 957,1310 970,1330 955,1375 915,1425 860,1465 815,1472 775,1475 730,1488 710,1480 702,1450 708,1430Z"],
      ["#b8b8b8", "M863,1388 885,1367 906,1385 886,1406Z"],
      ["#b4b4b4", "M933,1325 948,1312 960,1330 945,1342Z"],
      ["#8f8f8f", "M1018,1032 1060,1035 1120,1012 1120,1050 1126,1095 1105,1130 1060,1150 1010,1195 1020,1215 1020,1260 1012,1288 975,1300 960,1322 950,1245 975,1205 980,1132 932,1112 940,1100 985,1085 1008,1092 1005,1115 1020,1140 1032,1120 1030,1090Z"],
      ["#9b9b9b", "M988,992 1005,998 1010,1040 1015,1075 1032,1095 1020,1140 1005,1115 1005,1090 982,1080Z"],
      ["#7f817f", "M930,895 945,860 950,828 1005,830 1100,895 1098,940 1105,980 1120,1012 1060,1035 1015,1030 1000,992 945,970 925,935Z"],
      ["#7f817f", "M1012,718 1040,715 1100,738 1148,725 1135,745 1135,830 1118,860 1105,895 1005,830 1022,770Z"],
      ["#7f817f", "M948,730 1008,725 1022,765 1005,800 990,830 930,830 928,800 952,765Z"],
      ["#8d8d8d", "M918,838 945,828 948,855 915,862Z"],
      ["#a0a0a0", "M915,862 946,857 930,893 920,890Z"],
      ["#6c6c6c", "M1048,528 1075,518 1110,522 1135,540 1158,568 1165,602 1195,635 1255,652 1205,708 1148,722 1100,735 1035,712 1015,685 990,645 1005,620 1008,580Z"],
      ["#acacac", "M1055,470 1080,455 1095,490 1130,512 1160,560 1135,540 1110,520 1048,522Z"],
      ["#9f9f9e", "M1165,592 1200,598 1265,585 1315,570 1318,600 1300,650 1275,690 1230,755 1180,800 1145,835 1132,825 1135,745 1148,722 1205,708 1258,650 1195,635 1165,605Z"],
      ["#b8b8b8", "M1145,572 1165,565 1168,582 1150,588Z"],
      ["#888888", "M1003,250 1030,232 1055,215 1045,195 1075,175 1125,200 1180,228 1225,228 1245,255 1290,290 1310,330 1330,350 1382,358 1382,408 1325,432 1265,438 1240,468 1165,462 1155,445 1130,415 1115,390 1085,350 1060,310 1030,275Z"],
      ["#8e8e8c", "M1163,464 1240,468 1262,438 1325,432 1342,475 1330,495 1280,515 1210,548 1180,550 1165,515Z"],
      ["#b4b4b4", "M1328,432 1382,408 1382,358 1390,315 1410,335 1445,345 1462,365 1430,405 1420,435 1390,462 1345,472Z"],
      ["#a0a0a0", "M1315,332 1360,332 1388,308 1385,355 1335,350Z"],
      ["#bcbcbc", "M1213,218 1235,208 1245,232 1225,232Z"],
      ["#8e8e8c", "M1015,98 1050,90 1110,82 1105,145 1075,170 1028,200 1012,185Z"],
      ["#878787", "M1110,80 1155,76 1165,105 1190,130 1180,150 1210,180 1235,210 1228,228 1180,228 1075,175 1072,155 1105,140Z"],
      ["#a6a6a6", "M1008,190 1030,200 1070,152 1075,172 1040,190 1058,205 1030,228 1003,230Z"],
      ["#727472", "M1148,32 1180,48 1212,50 1245,75 1290,88 1335,68 1365,55 1425,68 1445,85 1450,120 1443,155 1455,185 1475,215 1490,240 1512,270 1490,300 1440,302 1405,290 1395,270 1355,275 1300,250 1275,215 1235,205 1210,180 1180,150 1190,125 1165,100Z"],
    ],
    isles: [
      ["#90908e", "M1282,1045 1297,1070 1298,1110 1288,1110 1270,1180 1250,1225 1240,1275 1228,1297 1195,1308 1172,1298 1162,1240 1185,1200 1182,1145 1192,1122 1232,1110 1255,1090 1258,1075Z"],
      ["#909090", "M1355,552 1378,555 1362,562ZM1378,1218 1390,1222 1380,1223ZM1420,1202 1426,1203 1422,1206ZM535,738 542,730 543,738ZM495,800 499,798 498,802Z"],
    ],
    water: "M962,820 980,800 1002,797 1005,825 992,852 965,850ZM1005,995 1012,1000 1018,1060 1028,1090 1015,1082ZM1012,1118 1022,1125 1020,1142Z",
    shores: "M920,890 922,930 940,968",
  },
  {
    id: "asia",
    at: "translate(1560 1240) scale(.63776 .43367)",
    under: [
      ["#5a5a5a", "M300,196 330,190 332,178 375,162 412,156 430,136 465,152 495,148 520,155 535,170 532,185 510,195 500,208 525,200 560,195 600,198 610,208 640,200 680,202 705,212 715,225 735,238 745,225 775,230 800,222 810,212 850,222 880,226 915,238 940,232 970,238 990,255 1060,258 1090,265 1075,250 1130,255 1165,262 1205,282 1240,295 1260,308 1250,298 1285,302 1312,320 1308,328 1318,345 1285,335 1262,325 1228,315 1238,325 1222,330 1240,338 1208,335 1215,345 1245,350 1262,365 1273,378 1250,378 1235,395 1228,425 1200,415 1168,425 1172,450 1195,462 1190,480 1210,495 1205,515 1218,520 1208,535 1215,560 1212,588 1185,550 1165,525 1138,490 1132,462 1142,440 1145,408 1132,375 1130,412 1112,392 1082,390 1082,425 1095,438 1060,430 1040,435 975,433 970,468 965,485 952,518 980,525 990,540 1000,530 1030,550 1045,585 1062,635 1058,680 1050,735 1040,748 1015,742 960,720 860,640 740,640 600,640 515,632 440,620 350,600 300,600Z"],
      ["#5a5a5a", "M1032,530 1045,540 1060,575 1085,605 1108,636 1090,622 1080,630 1098,660 1112,688 1100,675 1075,625 1052,580ZM318,95 340,88 355,102 385,108 375,115 345,108ZM393,118 410,113 435,122 405,128ZM715,160 740,158 755,168 780,170 772,182 745,182 730,170ZM780,168 800,168 835,178 800,178ZM765,188 800,198 775,196ZM1130,225 1155,230 1135,235ZM1338,358 1355,362 1345,365ZM1250,510 1262,515 1255,520ZM1268,515 1280,522 1272,524Z"],
      ["#a0a0a0", "M1347,552 1353,557 1350,558ZM1408,573 1412,576 1408,577ZM1426,577 1431,577 1428,580ZM1457,576 1473,576 1462,577ZM1487,568 1500,566 1493,569ZM1515,560 1520,560 1518,562Z"],
    ],
    land: [
      ["#959595", "M95,632 98,610 120,600 130,580 155,580 175,598 195,595 235,598 238,575 225,540 260,525 280,518 300,510 318,515 325,528 355,535 378,530 400,555 425,590 450,592 475,605 512,630 502,662 482,668 482,702 460,705 470,745 400,745 380,770 350,785 335,765 315,738 290,732 260,722 250,700 235,703 205,708 210,775 185,760 160,745 140,720 165,695 165,672 125,678Z"],
      ["#868886", "M205,708 240,700 255,722 290,735 315,738 335,768 350,788 370,770 375,790 350,815 348,850 325,835 300,810 270,780 250,758 235,755 212,778Z"],
      ["#aaaaaa", "M190,775 210,780 225,775 235,755 255,762 262,780 300,810 325,835 342,848 325,858 320,878 300,895 285,885 280,862 240,842 205,850 190,812Z"],
      ["#aaaaaa", "M350,785 380,770 400,745 470,748 470,768 440,780 430,795 410,808 380,800 395,785 370,778Z"],
      ["#9f9f9f", "M348,820 380,800 400,815 425,815 438,860 400,862 388,840 370,845 348,850Z"],
      ["#868886", "M283,885 300,895 325,860 350,852 380,855 385,840 395,845 400,865 435,862 400,880 398,905 385,925 380,960 355,1000 325,1008 302,1003 290,965 282,920Z"],
      ["#565856", "M302,1003 325,1008 355,1000 380,965 385,925 398,905 402,880 435,862 450,875 468,895 460,908 430,908 440,935 448,960 435,1000 420,1040 400,1045 405,1075 420,1112 388,1115 365,1085 312,1092 325,1050Z"],
      ["#020607", "M512,632 535,645 552,660 570,700 610,715 645,750 705,755 740,772 795,750 798,712 830,695 865,670 845,655 815,648 815,620 832,608 835,580 823,555 850,543 878,552 895,580 925,615 950,625 975,655 1008,643 1015,690 1002,715 1010,745 985,775 965,785 960,800 935,828 932,815 940,800 930,788 915,795 915,812 895,826 905,835 920,835 922,855 940,850 955,858 935,880 935,905 955,930 975,965 980,985 988,1005 972,1050 970,1090 955,1115 942,1138 912,1138 910,1150 880,1158 870,1170 865,1160 840,1160 825,1135 780,1150 755,1160 745,1115 728,1098 732,1055 712,1020 705,1010 680,1008 660,1028 655,1045 635,1030 600,1038 530,995 515,990 495,975 495,945 470,895 435,850 430,830 415,815 430,795 465,770 470,745 462,705 482,702 485,672 503,662Z"],
      ["#b0b2b1", "M518,625 545,602 575,597 583,605 610,608 608,578 622,572 655,590 658,603 700,602 720,610 740,625 760,622 780,608 815,618 815,648 845,652 866,668 832,685 825,705 798,712 802,742 785,752 765,755 740,772 705,755 645,750 630,730 610,712 575,705 570,685 550,655Z"],
      ["#050606", "M430,910 460,908 470,895 495,945 495,975 515,992 512,1015 560,1050 612,1072 608,1042 622,1062 655,1062 662,1025 680,1010 692,1008 708,1030 692,1060 688,1100 675,1130 665,1110 660,1092 622,1085 630,1150 608,1165 605,1195 585,1225 560,1260 537,1280 540,1330 533,1385 522,1405 512,1430 498,1412 480,1330 460,1260 452,1210 445,1160 435,1165 425,1178 402,1160 398,1148 412,1142 388,1118 420,1112 405,1075 402,1045 420,1040 435,1000 448,960Z"],
      ["#5c5c5c", "M612,1070 630,1090 660,1092 655,1110 652,1125 660,1148 650,1155 640,1140 635,1158 625,1155Z"],
      ["#8b8b8b", "M515,992 532,992 560,1015 608,1042 610,1070 560,1050 512,1018Z"],
      ["#d0d0d0", "M615,1045 632,1028 655,1045 652,1062 622,1060Z"],
      ["#8e8e8e", "M962,805 985,775 1008,752 1010,790 992,812 1003,835 985,842 975,830Z"],
      ["#7d7f7d", "M1000,840 1020,845 1042,885 1038,900 1015,912 1008,880Z"],
      ["#7c7e7c", "M672,1128 685,1110 690,1070 700,1050 712,1022 718,1040 733,1050 728,1095 745,1118 757,1160 772,1165 735,1200 737,1240 752,1295 762,1340 764,1385 758,1375 750,1320 730,1250 722,1270 700,1275 700,1215 678,1182Z"],
      ["#727472", "M735,1202 768,1180 770,1215 785,1242 810,1230 828,1255 833,1300 802,1310 800,1335 778,1322 768,1340 765,1395 778,1412 790,1440 808,1470 782,1462 755,1425 762,1390 760,1320 748,1275Z"],
      ["#6b6d6b", "M778,1150 800,1145 820,1130 845,1148 848,1165 830,1192 832,1222 865,1262 878,1290 880,1350 850,1385 832,1420 835,1385 857,1362 862,1310 840,1260 815,1215 812,1188Z"],
      ["#a6a6a6", "M765,1180 785,1150 795,1172 815,1185 815,1212 838,1250 858,1300 835,1305 830,1262 808,1230 782,1240 775,1210Z"],
      ["#969696", "M800,1315 858,1303 860,1345 832,1380 815,1370Z"],
    ],
    isles: [
      ["#020607", "M860,1208 872,1190 888,1192 885,1215 872,1228 862,1220ZM874,1165 880,1165 879,1188 875,1188Z"],
      ["#5c5e5c", "M1108,708 1130,722 1150,738 1163,735 1160,750 1145,765 1130,752 1115,755 1118,735ZM1128,778 1140,785 1152,798 1158,830 1155,850 1165,880 1162,900 1148,892 1140,902 1120,910 1108,902 1085,910 1078,920 1065,922 1080,895 1105,888 1118,880 1128,855 1140,845 1142,825 1130,790ZM1058,935 1078,930 1083,955 1080,975 1070,950ZM1088,930 1105,918 1110,925 1095,942ZM1112,920 1128,908 1128,918 1118,926ZM1160,723 1167,714 1165,719ZM1206,592 1208,596 1205,615ZM1189,689 1193,681 1190,690ZM1078,1000 1082,1005 1077,1016ZM1069,1055 1073,1060 1067,1068Z"],
      ["#8d8d8d", "M988,1105 1000,1090 1003,1110 996,1148 988,1130Z"],
      ["#909090", "M540,1398 552,1412 563,1440 558,1462 545,1470 538,1460Z"],
      ["#7d7f7d", "M1015,932 1025,932 1020,942Z"],
    ],
    water: "M108,708 120,690 122,676 168,670 166,695 142,712 165,755 178,765 190,758 202,780 185,790 188,815 200,850 185,870 165,865 145,845 150,810 130,760ZM692,503 698,520 706,540 700,560 690,578 665,581 680,570 692,555 698,540 690,520ZM228,685 245,675 255,690 248,720 232,722 238,700Z",
    shores: "M388,702 392,684 402,678 415,682 440,678",
  },
  {
    id: "oceania",
    at: "translate(1900 1640) scale(.53571 .45918)",
    land: [
      ["#4a4c4a", "M418,598 430,600 445,610 500,602 512,565 515,550 537,550 543,585 557,605 540,615 537,650 523,668 521,697 498,702 485,690 460,690 433,687 431,640 419,625Z"],
      ["#868886", "M427,602 450,600 455,580 480,568 488,546 502,538 512,552 500,602 460,610Z"],
      ["#8a8a8a", "M508,535 520,518 530,500 542,513 560,530 547,549 512,549Z"],
      ["#4a4c4a", "M782,699 800,670 820,656 865,678 862,797 848,787 818,787 823,768 840,765 828,727 788,707 766,704Z"],
      ["#a8a8a8", "M866,677 905,693 932,713 942,733 964,744 948,755 957,784 974,799 1003,826 975,822 953,814 938,777 905,772 897,797 882,802 866,800Z"],
    ],
    isles: [
      ["#4a4c4a", "M732,655 748,638 765,642 772,652 770,664 758,665 740,660ZM755,672 770,670 775,685 795,695 785,702 768,702 755,690Z"],
      ["#8a8a8a", "M300,515 318,512 340,540 342,575 352,605 325,590 302,555Z"],
      ["#4a4c4a", "M222,525 258,528 275,558 300,585 320,598 345,625 342,645 360,665 375,685 373,732 358,735 340,722 320,690 300,650 285,620 275,590 250,560ZM368,745 385,740 410,755 435,762 442,750 462,764 485,765 495,785 470,782 430,775 385,768ZM498,786 512,785 508,794ZM515,788 535,784 530,796ZM540,792 560,786 565,795 545,798ZM568,788 605,790 600,795 570,795ZM610,788 640,782 655,773 630,790ZM555,803 575,812 575,820 562,812ZM615,820 622,800 638,797 632,810ZM600,826 610,822 606,832ZM565,732 568,690 555,680 570,650 568,625 585,607 610,612 635,610 645,598 640,618 610,622 580,618 580,650 600,648 622,642 598,662 590,668 598,690 612,705 605,728 595,715 592,690 580,680 578,712 575,732ZM678,640 682,600 692,580 690,600 698,608 684,618ZM688,683 715,680 722,695 700,690 685,690ZM658,685 672,688 668,698ZM635,660 660,662 640,664ZM718,650 728,640 722,654ZM768,735 772,745 768,758ZM735,762 726,780 728,768ZM700,783 720,776 705,780ZM365,660 380,672 385,685 370,680ZM398,680 408,680 402,688ZM232,574 240,578 238,584ZM255,600 264,608 260,615ZM275,645 282,655 278,662ZM288,675 298,688 294,688ZM820,768 835,768 835,782 820,782ZM785,660 805,655 800,660ZM200,493 204,495 202,500ZM668,545 664,560 666,550Z"],
      ["#646664", "M560,282 580,282 588,305 582,335 575,348 582,362 602,365 605,375 585,368 568,352 556,345 558,320ZM572,368 580,378 580,395 574,385ZM603,362 620,370 622,380 610,375ZM628,385 640,400 640,415 630,410ZM592,405 600,415 604,435 596,425ZM608,425 618,430 615,440ZM620,400 622,420 618,418ZM600,445 625,440 618,455 606,455ZM628,425 636,435 632,440ZM600,480 612,472 620,475 618,485 632,488 640,460 648,452 652,470 662,490 658,505 650,508 648,522 635,510 630,498 618,490 603,495ZM530,470 548,448 560,425 558,440 540,465ZM182,375 186,380 184,400 181,400ZM181,415 184,415 182,430ZM628,0 650,0 655,35 652,52 642,40 640,15 622,12ZM662,10 680,0 708,4 690,10 670,20Z"],
      ["#b0b0b0", "M970,738 990,740 1010,732 1022,710 1030,715 1020,735 1000,746 985,748ZM1005,675 1025,690 1038,715 1030,705 1015,685ZM1058,732 1075,752 1070,755ZM1082,768 1098,778 1092,778ZM1112,772 1122,790 1116,785ZM1125,792 1145,800 1138,800ZM1145,815 1158,828 1150,825ZM948,665 956,668 950,670ZM640,795 665,782 660,790ZM1346,958 1360,955 1365,964 1350,968ZM1368,940 1388,932 1378,942Z"],
      ["#d0d0d0", "M1155,1005 1168,1022 1186,1042 1172,1036 1160,1020ZM1207,905 1213,915 1209,920ZM1215,925 1225,935 1217,938ZM1222,945 1226,950 1222,958ZM1228,965 1230,972 1227,970ZM1195,1028 1205,1028 1200,1032ZM1500,882 1515,888 1508,888Z"],
      ["#909090", "M423,1262 432,1252 440,1248 447,1210 442,1170 443,1135 438,1115 448,1118 447,1100 445,1070 455,1042 475,1030 500,1012 535,1002 570,988 582,965 585,948 598,935 602,948 610,935 622,930 622,910 635,898 655,885 662,895 675,908 692,908 695,885 705,870 708,855 725,858 745,855 742,845 760,848 775,852 798,858 785,880 785,892 772,905 795,925 825,955 843,957 855,925 860,905 862,875 872,845 878,828 886,850 888,890 908,900 908,935 913,950 912,980 940,1005 948,1045 960,1048 962,1065 975,1085 981,1105 972,1130 972,1165 955,1195 938,1230 915,1245 900,1270 880,1295 855,1330 830,1330 805,1350 795,1335 785,1345 765,1348 735,1332 733,1310 738,1290 738,1240 720,1262 705,1270 698,1275 690,1240 685,1225 655,1215 630,1220 585,1228 560,1238 540,1258 485,1260 475,1272 450,1280 432,1275ZM765,1387 785,1393 810,1388 800,1405 780,1428 765,1437 756,1430 762,1410ZM710,1292 725,1285 735,1270 732,1292ZM708,843 722,840 715,846ZM815,1370 818,1375 812,1382ZM763,1367 768,1368 765,1375Z"],
      ["#adafae", "M1188,1270 1196,1280 1202,1300 1200,1318 1212,1328 1235,1326 1230,1340 1205,1358 1200,1372 1180,1378 1165,1395 1150,1398 1170,1378 1155,1362 1170,1355 1185,1340 1195,1320 1192,1300ZM988,1482 1010,1465 1060,1432 1085,1420 1128,1385 1132,1395 1140,1392 1115,1412 1095,1440 1060,1455 1040,1475 1015,1494 992,1490ZM988,1500 996,1498 990,1503ZM1228,1442 1232,1440 1230,1448Z"],
    ],
  },
];

function Sheet({ sheet }) {
  const draw = (list, Shape) =>
    list.map(([fill, d], i) => <Shape key={i} fill={fill} d={d} />);
  return (
    <g transform={sheet.at}>
      {draw(sheet.land, Land)}
      {draw(sheet.isles, Isle)}
      {sheet.water && <Water d={sheet.water} />}
      {sheet.shores && <Shoreline d={sheet.shores} />}
    </g>
  );
}

const order = ["greenland", "north-america", "south-america", "europe", "africa-arabia", "asia", "oceania"];

/* Russia reaches under its neighbours, so its part of the Europe sheet is laid down first. */
function World() {
  const europe = sheets.find((s) => s.id === "europe");
  const asia = sheets.find((s) => s.id === "asia");
  const russia = europe.isles.filter(([fill]) => fill === "#5a5a5a");
  return (
    <WorldMap viewBox="100 1240 2640 1220" role="img" aria-label="World map">
      <defs>
        <filter
          id="rugged"
          filterUnits="userSpaceOnUse"
          x="100"
          y="1240"
          width="2640"
          height="1220"
          colorInterpolationFilters="sRGB"
        >
          <feTurbulence type="fractalNoise" baseFrequency="0.13" numOctaves="2" seed="4" />
          <feDisplacementMap in="SourceGraphic" scale="5.5" xChannelSelector="R" yChannelSelector="G" />
        </filter>
      </defs>
      <g filter="url(#rugged)">
        <Sheet sheet={{ at: europe.at, land: [], isles: russia }} />
        <Sheet sheet={{ at: asia.at, land: [], isles: asia.under }} />
        {order.map((id) => {
          const s = sheets.find((x) => x.id === id);
          const isles = id === "europe" ? s.isles.filter(([fill]) => fill !== "#5a5a5a") : s.isles;
          return <Sheet key={id} sheet={{ ...s, isles }} />;
        })}
      </g>
    </WorldMap>
  );
}

const navItems = [
  { label: "HOME", width: 396, pad: 92, ink: 218, top: 66, left: 0.036, right: 0.018 },
  { label: "ABOUT", width: 441, pad: 90, ink: 252, top: 68, left: 0.005, right: 0.007 },
  { label: "EXPLORE DATA", width: 735, pad: 86, ink: 561, top: 68, left: 0.036, right: 0.005, active: true },
  { label: "GET INVOLVED", width: 713, pad: 82, ink: 540, top: 68, left: 0.026, right: 0.026 },
];

export default function App() {
  return (
    <>
      <GlobalStyle />
      <NavBar>
        <LogoCell>
          <Logo viewBox="0 0 234 214">
            <g fill="#fff">
              <path d="M32,115.5 92,64V71.5Q64,91 64,115.5T92,158.5V166Z" />
              <path d="M190,115.5 130,64V71.5Q159,91 159,115.5T130,158.5V166Z" />
            </g>
            <circle cx="111.7" cy="115.7" r="30.6" fill="none" stroke="#fff" strokeWidth="14.2" />
          </Logo>
        </LogoCell>
        {navItems.map((n) => (
          <NavItem key={n.label} $width={n.width} $pad={n.pad} $top={n.top} $active={n.active}>
            <FitText width={n.ink} left={n.left} right={n.right}>{n.label}</FitText>
          </NavItem>
        ))}
      </NavBar>
      <Main>
        <Heading>
          <FitText width={1102} left={0.0185} right={0.003}>SELECT A COUNTRY</FitText>
          <Or><FitText width={147} left={0.026} right={0.012}>OR</FitText></Or>
          <FitText width={1271} left={0.036} right={0.01}>ENTER A WEBSITE URL</FitText>
        </Heading>
        <Subtitles>
          <FitText width={955} left={0.03} right={0.065}>and find out its internet situation</FitText>
          <FitText width={1141} left={0.02} right={0.065}>{"to see where  in the world it is blocked"}</FitText>
        </Subtitles>
        <Tabs>
          <Tab $active $width={512} $pad={49}><FitText width={407} left={0.036} right={0.003}>BY COUNTRY</FitText></Tab>
          <Tab $width={532} $pad={68}><FitText width={392} left={0.036} right={0.018}>BY WEBSITE</FitText></Tab>
        </Tabs>
        <Field>
          <FitText width={448} left={0.08} right={0.005}>Enter a country</FitText>
          <Caret />
        </Field>
        <MapTitle><FitText width={756} left={0.026} right={0.02}>OR FIND IT ON THE MAP</FitText></MapTitle>
        <World />
      </Main>
    </>
  );
}
